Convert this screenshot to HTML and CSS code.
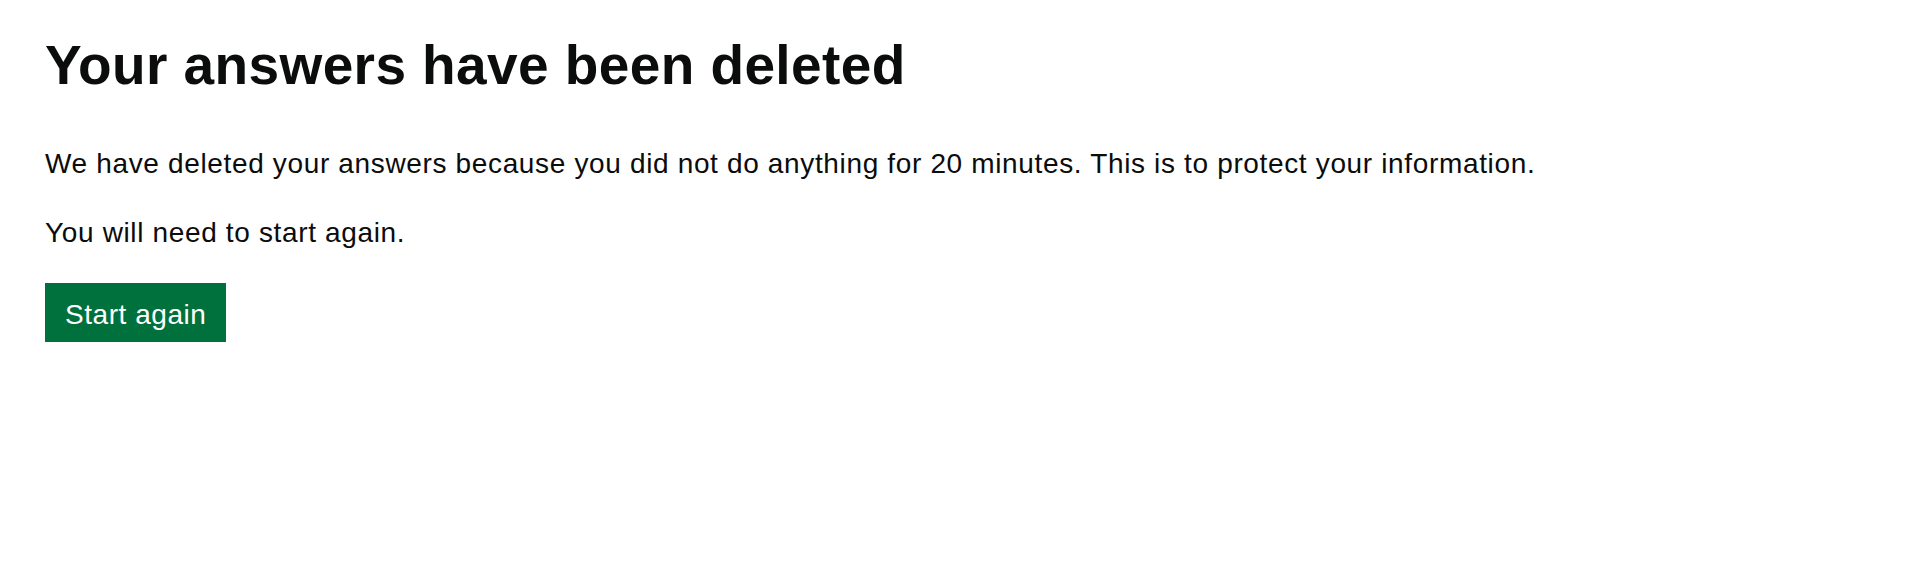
FILE: index.html
```html
<!DOCTYPE html>
<html lang="en">
<head>
<meta charset="utf-8">
<title>Your answers have been deleted</title>
<link rel="stylesheet" href="styles.css">
</head>
<body>
<main class="main">
  <h1 class="heading">Your answers have been deleted</h1>
  <p class="body">We have deleted your answers because you did not do anything for 20 minutes. This is to protect your information.</p>
  <p class="body">You will need to start again.</p>
  <a class="button" href="#">Start again</a>
</main>
</body>
</html>
```

FILE: styles.css
```css
html, body {
  margin: 0;
  padding: 0;
  background: #ffffff;
}
body {
  font-family: "Liberation Sans", Arial, Helvetica, sans-serif;
  color: #0b0c0c;
}
.main {
  display: flex;
  flex-direction: column;
  align-items: flex-start;
  padding: 35px 45px 0 45px;
}
.heading {
  margin: 0 0 51px 0;
  font-size: 55px;
  line-height: 60px;
  font-weight: 700;
  letter-spacing: 0.4px;
}
.body {
  margin: 0 0 33px 0;
  font-size: 28px;
  line-height: 36px;
  letter-spacing: 0.65px;
}
.body:last-of-type {
  margin-bottom: 32px;
}
.button {
  display: block;
  background: #00703c;
  color: #ffffff;
  text-decoration: none;
  font-size: 28px;
  line-height: 31px;
  letter-spacing: 0.55px;
  padding: 16px 20px 12px 20px;
  box-shadow: 0 3px 0 #002d18;
}
```
